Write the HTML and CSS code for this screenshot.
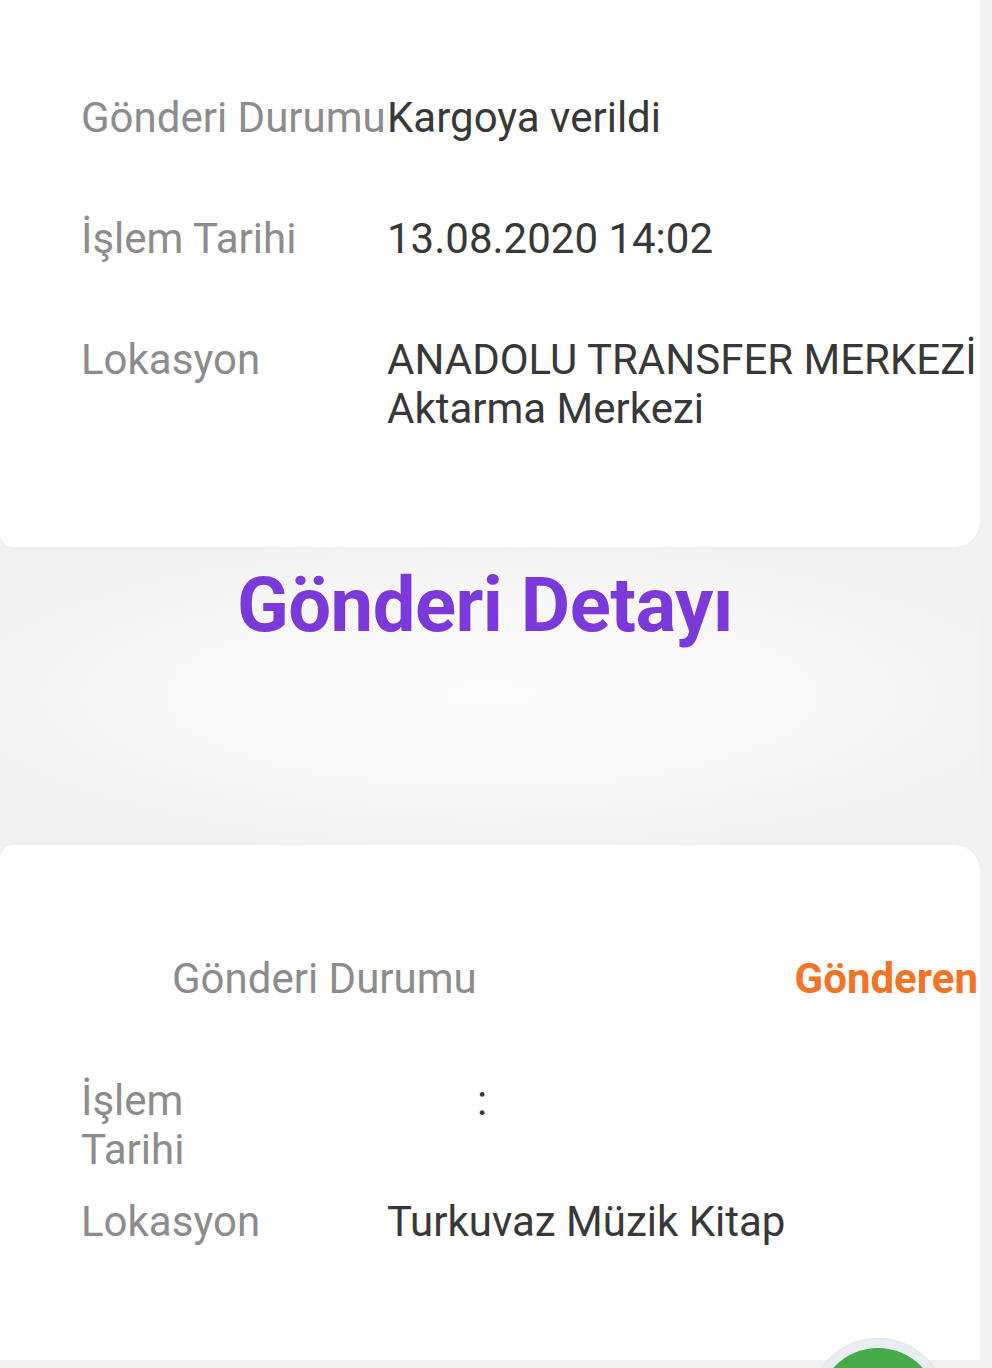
FILE: index.html
```html
<!DOCTYPE html>
<html lang="tr">
<head>
<meta charset="utf-8">
<title>Gönderi Detayı</title>
<link rel="stylesheet" href="styles.css">
</head>
<body>
<div class="page">
  <section class="card card-top">
    <div class="info-grid">
      <div class="label">Gönderi Durumu</div>
      <div class="value">Kargoya verildi</div>
      <div class="label">İşlem Tarihi</div>
      <div class="value">13.08.2020 14:02</div>
      <div class="label">Lokasyon</div>
      <div class="value"><span class="nw">ANADOLU TRANSFER MERKEZİ</span> <span class="nw">Aktarma Merkezi</span></div>
    </div>
  </section>

  <div class="title-band">
    <h1 class="title">Gönderi Detayı</h1>
  </div>

  <section class="card card-bottom">
    <div class="row-head">
      <span class="label">Gönderi Durumu</span>
      <span class="sender">Gönderen</span>
    </div>
    <div class="row-date">
      <span class="label label-narrow">İşlem Tarihi</span>
      <span class="colon">:</span>
    </div>
    <div class="row-loc">
      <span class="label">Lokasyon</span>
      <span class="value">Turkuvaz Müzik Kitap</span>
    </div>
  </section>
</div>
<div class="fab">
  <svg width="140" height="40" viewBox="0 0 140 40" aria-hidden="true">
    <circle cx="70" cy="80" r="70" fill="#eaedf0"/>
    <circle cx="70" cy="80" r="69.5" fill="none" stroke="#e3e6e9" stroke-width="1"/>
    <circle cx="70" cy="80" r="60" fill="#46ab4a"/>
  </svg>
</div>
</body>
</html>
```
FILE: styles.css
```css
html, body {
  margin: 0;
  padding: 0;
}
body {
  background: #f1f1f1;
  font-family: Roboto, "Liberation Sans", Arial, sans-serif;
  width: 992px;
  height: 1368px;
  overflow: hidden;
  position: relative;
}
.page {
  width: 980px;
  display: flex;
  flex-direction: column;
}
.card {
  background: #ffffff;
  box-sizing: border-box;
}
.card-top {
  border-radius: 0 0 26px 14px;
  padding: 93px 0 114px 81px;
}
.info-grid {
  display: grid;
  grid-template-columns: 306px 1fr;
  row-gap: 72px;
}
.label {
  font-size: 42px;
  line-height: 49px;
  color: #8c8c8c;
  white-space: nowrap;
}
.value {
  font-size: 42px;
  line-height: 49px;
  color: #383838;
}
.nw {
  white-space: nowrap;
}
.title-band {
  height: 298px;
  box-sizing: border-box;
  padding-top: 13px;
  background: radial-gradient(ellipse 60% 55% at 50% 50%, #fcfcfc 0%, #f9f9f9 45%, #f1f1f1 100%);
}
.title {
  margin: 0;
  padding-right: 10px;
  text-align: center;
  font-size: 76px;
  line-height: 90px;
  font-weight: 700;
  color: #7b39d9;
  letter-spacing: -0.5px;
}
.card-bottom {
  border-radius: 14px 26px 0 0;
  padding: 109px 0 114px 0;
  height: 515px;
}
.row-head {
  display: flex;
  justify-content: space-between;
  padding-left: 172px;
  padding-right: 2px;
}
.sender {
  font-size: 42px;
  line-height: 49px;
  font-weight: 700;
  color: #f47427;
}
.row-date {
  display: flex;
  align-items: flex-start;
  margin-top: 73px;
  padding-left: 81px;
}
.label-narrow {
  white-space: normal;
  width: 130px;
}
.colon {
  font-size: 42px;
  line-height: 49px;
  color: #383838;
  margin-left: 266px;
}
.row-loc {
  display: grid;
  grid-template-columns: 306px 1fr;
  margin-top: 23px;
  padding-left: 81px;
}
.fab {
  position: absolute;
  left: 808px;
  top: 1328px;
  width: 140px;
  height: 40px;
  overflow: hidden;
}
.fab svg {
  display: block;
}
```
